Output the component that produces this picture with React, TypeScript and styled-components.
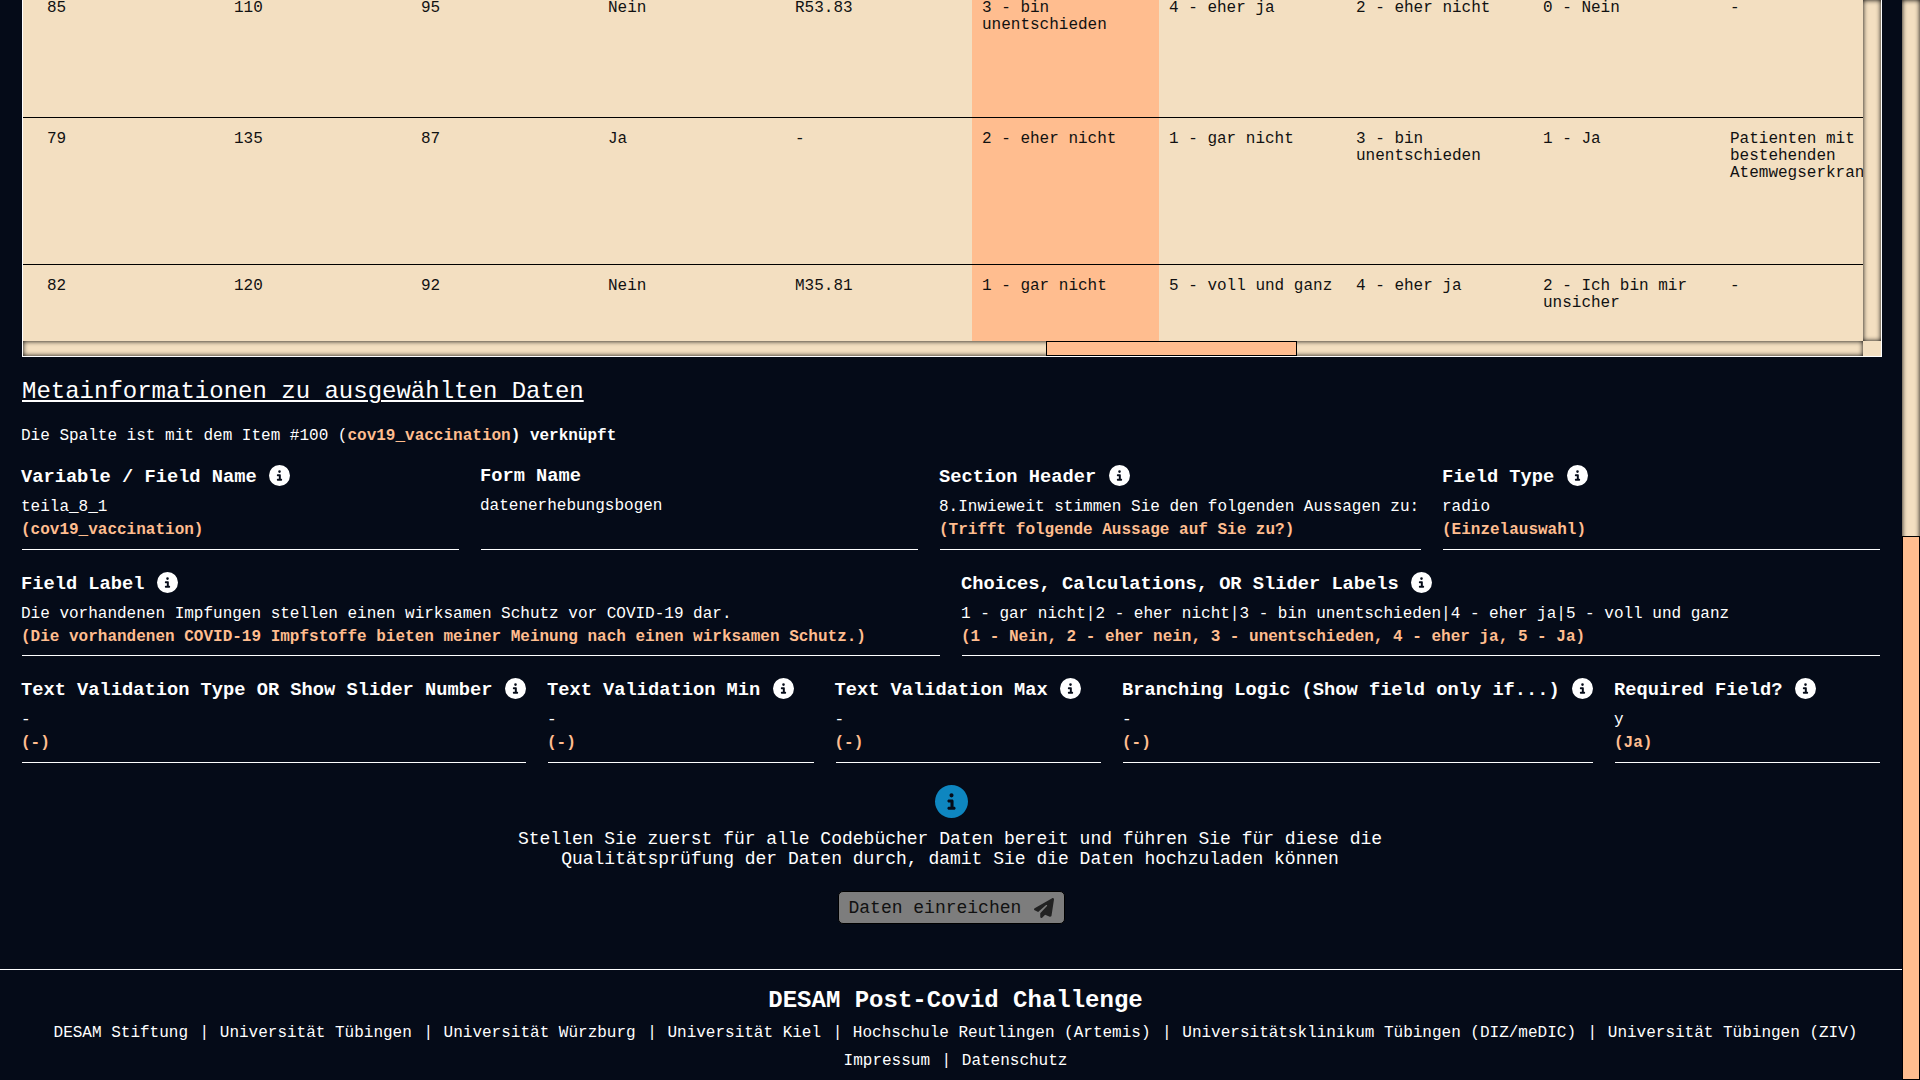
import React from "react";
import styled, { createGlobalStyle } from "styled-components";
import { FaCircleInfo, FaPaperPlane } from "react-icons/fa6";

const c = {
  bg: "#050b18",
  sand: "#f3dfc1",
  peach: "#ffbd8f",
  blue: "#0e86c0",
};

const GlobalStyle = createGlobalStyle`
  * { box-sizing: border-box; }
  body {
    margin: 0;
    background: ${c.bg};
    color: #fff;
    font: 16px/19px "Liberation Mono", monospace;
    overflow: hidden;
  }
`;

const Page = styled.div`
  display: grid;
  grid-template-columns: 1902px 18px;
  height: 1080px;
  overflow: hidden;
`;

const Content = styled.main`
  display: flex;
  flex-direction: column;
  min-width: 0;
`;

const insetShadow = "inset 0 0 5px #000";

const PageTrack = styled.div`
  display: flex;
  flex-direction: column;
  justify-content: flex-end;
  background: ${c.sand};
  box-shadow: ${insetShadow};
`;

const PageThumb = styled.div`
  height: 544px;
  background: ${c.peach};
  border: 1px solid #000;
`;

const TableBox = styled.section`
  display: grid;
  grid-template-columns: 1840px 18px;
  grid-template-rows: 341px 15px;
  width: 1860px;
  height: 357px;
  margin-left: 22px;
  background: ${c.sand};
  border: 1px solid #fff;
  border-top: 0;
`;

const Viewport = styled.div`
  display: flex;
  flex-direction: column;
  overflow: hidden;
  color: #111;
`;

const Row = styled.div<{ $height: number }>`
  display: grid;
  flex: none;
  grid-template-columns: repeat(10, 187px);
  width: 1884px;
  height: ${(p) => p.$height}px;
  padding-left: 14px;
  border-bottom: 1px solid #000;
`;

const Cell = styled.div<{ $active?: boolean; $first?: boolean }>`
  padding: ${(p) => (p.$first ? 0 : 13)}px 10px 0;
  line-height: 17px;
  background: ${(p) => (p.$active ? c.peach : "transparent")};
`;

const VerticalTrack = styled.div`
  background: ${c.sand};
  box-shadow: ${insetShadow};
`;

const HorizontalTrack = styled(VerticalTrack)`
  padding-left: 1023px;
`;

const HorizontalThumb = styled.div`
  width: 251px;
  height: 15px;
  background: ${c.peach};
  border: 1px solid #000;
`;

const Meta = styled.section`
  padding: 20px 22px 0;
`;

const MetaTitle = styled.h2`
  margin: 0;
  font-size: 24px;
  font-weight: 400;
  line-height: 30px;
  text-decoration: underline;
  text-decoration-thickness: 2px;
  text-underline-offset: 2px;
`;

const LinkInfo = styled.p`
  margin: 20px 0 0;
  line-height: 19px;
  text-indent: -1px;
`;

const Accent = styled.b`
  color: ${c.peach};
`;

const FieldRow = styled.div<{ $columns: string; $top: number; $height: number }>`
  display: grid;
  grid-template-columns: ${(p) => p.$columns};
  column-gap: 22px;
  margin-top: ${(p) => p.$top}px;
  height: ${(p) => p.$height}px;
`;

const Field = styled.div`
  display: flex;
  flex-direction: column;
  border-bottom: 1px solid #fff;
  white-space: nowrap;
  text-indent: -1px;
`;

const FieldName = styled.h3<{ $plain: boolean }>`
  display: flex;
  gap: 12.5px;
  margin: 0 0 ${(p) => (p.$plain ? 9 : 10)}px;
  height: 21px;
  font-size: 18.72px;
  line-height: ${(p) => (p.$plain ? 22 : 24)}px;

  svg { flex: none; width: 21px; height: 21px; }
`;

const Value = styled.span`
  line-height: 23px;
`;

const Translation = styled(Accent)`
  line-height: 23px;
`;

const Submit = styled.section`
  display: flex;
  flex-direction: column;
  align-items: center;
  padding-top: 22px;
  height: 206px;
`;

const BigInfo = styled(FaCircleInfo)`
  flex: none;
  width: 33px;
  height: 33px;
  color: ${c.blue};
`;

const Message = styled.p`
  width: 880px;
  margin: 11px 0 0;
  padding-right: 2px;
  font-size: 18px;
  line-height: 20px;
  text-align: center;
`;

const SubmitButton = styled.button`
  display: flex;
  align-items: center;
  justify-content: space-between;
  width: 227px;
  height: 33px;
  margin-top: 22px;
  padding: 0 10px;
  font: 18px "Liberation Mono", monospace;
  color: #111;
  background: #7d7d7d;
  border: 1px solid #000;
  border-radius: 5px;

  svg { width: 20px; height: 20px; color: #222; }
`;

const Footer = styled.footer`
  display: flex;
  flex: 1;
  flex-direction: column;
  align-items: center;
  padding: 16px 0 0 9px;
  border-top: 1px solid #fff;
`;

const FooterTitle = styled.h2`
  margin: 0;
  font-size: 24px;
  line-height: 29px;
`;

const Links = styled.nav<{ $top: number }>`
  display: flex;
  margin-top: ${(p) => p.$top}px;
  line-height: 20px;
  white-space: nowrap;
`;

const Link = styled.span`
  & + &::before { content: "|"; margin: 0 10.6px 0 11.6px; }
`;

const rows = [
  ["85", "110", "95", "Nein", "R53.83", "3 - bin unentschieden", "4 - eher ja", "2 - eher nicht", "0 - Nein", "-"],
  ["79", "135", "87", "Ja", "-", "2 - eher nicht", "1 - gar nicht", "3 - bin unentschieden", "1 - Ja", "Patienten mit bestehenden Atemwegserkrankungen"],
  ["82", "120", "92", "Nein", "M35.81", "1 - gar nicht", "5 - voll und ganz", "4 - eher ja", "2 - Ich bin mir unsicher", "-"],
];
const rowHeights = [118, 147, 147];

type FieldData = { name: string; value: string; translation?: string; info?: boolean };
type FieldGroup = { columns: string; top: number; height: number; fields: FieldData[] };

const groups: FieldGroup[] = [
  {
    columns: "437px 437px 481px 437px",
    top: 19,
    height: 85,
    fields: [
      { name: "Variable / Field Name", value: "teila_8_1", translation: "(cov19_vaccination)", info: true },
      { name: "Form Name", value: "datenerhebungsbogen" },
      { name: "Section Header", value: "8.Inwieweit stimmen Sie den folgenden Aussagen zu:", translation: "(Trifft folgende Aussage auf Sie zu?)", info: true },
      { name: "Field Type", value: "radio", translation: "(Einzelauswahl)", info: true },
    ],
  },
  {
    columns: "918px 918px",
    top: 22,
    height: 84,
    fields: [
      { name: "Field Label", value: "Die vorhandenen Impfungen stellen einen wirksamen Schutz vor COVID-19 dar.", translation: "(Die vorhandenen COVID-19 Impfstoffe bieten meiner Meinung nach einen wirksamen Schutz.)", info: true },
      { name: "Choices, Calculations, OR Slider Labels", value: "1 - gar nicht|2 - eher nicht|3 - bin unentschieden|4 - eher ja|5 - voll und ganz", translation: "(1 - Nein, 2 - eher nein, 3 - unentschieden, 4 - eher ja, 5 - Ja)", info: true },
    ],
  },
  {
    columns: "504px 265.5px 265.5px 470px 265px",
    top: 22,
    height: 85,
    fields: [
      { name: "Text Validation Type OR Show Slider Number", value: "-", translation: "(-)", info: true },
      { name: "Text Validation Min", value: "-", translation: "(-)", info: true },
      { name: "Text Validation Max", value: "-", translation: "(-)", info: true },
      { name: "Branching Logic (Show field only if...)", value: "-", translation: "(-)", info: true },
      { name: "Required Field?", value: "y", translation: "(Ja)", info: true },
    ],
  },
];

const partners = [
  "DESAM Stiftung",
  "Universität Tübingen",
  "Universität Würzburg",
  "Universität Kiel",
  "Hochschule Reutlingen (Artemis)",
  "Universitätsklinikum Tübingen (DIZ/meDIC)",
  "Universität Tübingen (ZIV)",
];

export default function App() {
  return (
    <Page>
      <GlobalStyle />
      <Content>
        <TableBox>
          <Viewport>
            {rows.map((row, r) => (
              <Row key={r} $height={rowHeights[r]}>
                {row.map((text, i) => (
                  <Cell key={i} $active={i === 5} $first={r === 0}>{text}</Cell>
                ))}
              </Row>
            ))}
          </Viewport>
          <VerticalTrack />
          <HorizontalTrack>
            <HorizontalThumb />
          </HorizontalTrack>
        </TableBox>
        <Meta>
          <MetaTitle>Metainformationen zu ausgewählten Daten</MetaTitle>
          <LinkInfo>
            Die Spalte ist mit dem Item #100 (<Accent>cov19_vaccination</Accent><b>) verknüpft</b>
          </LinkInfo>
          {groups.map((g) => (
            <FieldRow key={g.columns} $columns={g.columns} $top={g.top} $height={g.height}>
              {g.fields.map((f) => (
                <Field key={f.name}>
                  <FieldName $plain={!f.info}>
                    {f.name}
                    {f.info && <FaCircleInfo />}
                  </FieldName>
                  <Value>{f.value}</Value>
                  {f.translation && <Translation>{f.translation}</Translation>}
                </Field>
              ))}
            </FieldRow>
          ))}
        </Meta>
        <Submit>
          <BigInfo />
          <Message>
            Stellen Sie zuerst für alle Codebücher Daten bereit und führen Sie für diese die
            Qualitätsprüfung der Daten durch, damit Sie die Daten hochzuladen können
          </Message>
          <SubmitButton disabled>
            Daten einreichen
            <FaPaperPlane />
          </SubmitButton>
        </Submit>
        <Footer>
          <FooterTitle>DESAM Post-Covid Challenge</FooterTitle>
          <Links $top={8}>
            {partners.map((p) => <Link key={p}>{p}</Link>)}
          </Links>
          <Links $top={8}>
            <Link>Impressum</Link>
            <Link>Datenschutz</Link>
          </Links>
        </Footer>
      </Content>
      <PageTrack>
        <PageThumb />
      </PageTrack>
    </Page>
  );
}
